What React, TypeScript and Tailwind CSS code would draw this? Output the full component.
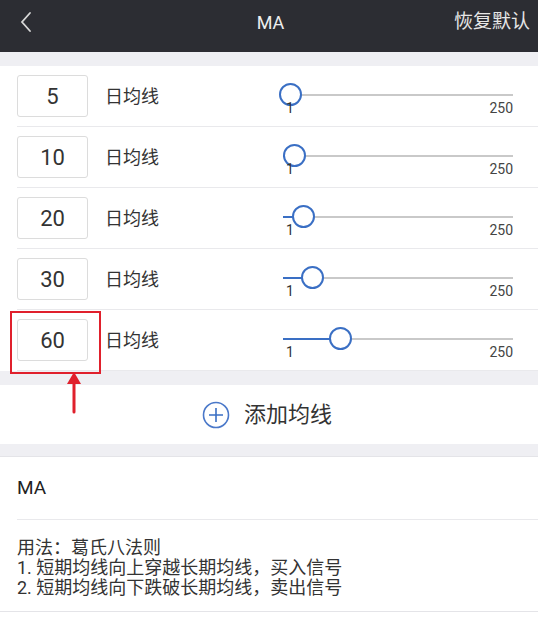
const lines = [
  { n: "5", pos: 7 },
  { n: "10", pos: 11 },
  { n: "20", pos: 20 },
  { n: "30", pos: 29 },
  { n: "60", pos: 57 },
];

const font = { fontFamily: "Roboto, 'Noto Sans CJK SC', sans-serif" };

function Slider({ pos }: { pos: number }) {
  return (
    <div className="mr-[25px] ml-auto flex w-[230px] flex-col pt-[17px]">
      <div className="relative h-[2px] bg-[#c9c9c9]">
        <div className="h-full bg-[#3a6fc4]" style={{ width: pos }} />
        <div
          className="absolute top-[-11px] h-[23px] w-[23px] rounded-full border-2 border-[#3a6fc4] bg-white"
          style={{ left: pos - 11.5 }}
        />
      </div>
      <div className="relative z-10 mt-[4px] flex justify-between pl-[3px] text-[14px] leading-4">
        <span className="text-[#333]">1</span>
        <span className="text-[#444]">250</span>
      </div>
    </div>
  );
}

export default function App() {
  return (
    <div className="relative h-[618px] w-[538px] overflow-hidden bg-white" style={font}>
      <header className="flex h-[52px] items-center bg-[#2c2d33] pb-[8px] text-white">
        <svg className="ml-[19px] h-[22px] w-[14px]" viewBox="0 0 14 22" fill="none">
          <path d="M11 2 L3 11 L11 20" stroke="#d8d8d8" strokeWidth="1.8" strokeLinecap="round" />
        </svg>
        <div className="flex-1 pl-[54px] text-center text-[18px] text-[#eee]">MA</div>
        <div className="mr-[8px] text-[19px] text-[#e6e6e6]">恢复默认</div>
      </header>

      <div className="h-[14px] bg-[#efeff3]" />

      <div>
        {lines.map((l) => (
          <div key={l.n} className="ml-[17px] flex h-[61px] items-center border-b border-[#e9e9ec]">
            <div className="flex h-[42px] w-[71px] items-center justify-center rounded-[3px] border border-[#dcdcdc] text-[22px] text-[#333]">
              {l.n}
            </div>
            <span className="ml-[17px] text-[18px] text-[#333]">日均线</span>
            <Slider pos={l.pos} />
          </div>
        ))}
      </div>

      <div className="h-[14px] bg-[#efeff3]" />

      <div className="flex h-[59px] items-center justify-center gap-[14px] pr-[4px]">
        <svg className="h-[28px] w-[28px]" viewBox="0 0 28 28" fill="none">
          <circle cx="14" cy="14" r="12.5" stroke="#4a78c9" strokeWidth="1.6" />
          <path d="M14 7 V21 M7 14 H21" stroke="#3a6fc4" strokeWidth="1.6" />
        </svg>
        <span className="text-[22px] text-[#333]">添加均线</span>
      </div>

      <div className="h-[13px] border-b border-[#e4e4e8] bg-[#efeff3]" />

      <section className="border-b border-[#e4e4e8]">
        <div className="px-[17px] pt-[19px] pb-[19px] text-[19px] leading-6 text-[#222]">MA</div>
        <div className="ml-[17px] border-t border-[#e9e9ec] pt-[18px] pb-[13px] text-[18px] leading-5 text-[#333]">
          <p>用法：葛氏八法则</p>
          <p>1. 短期均线向上穿越长期均线，买入信号</p>
          <p>2. 短期均线向下跌破长期均线，卖出信号</p>
        </div>
      </section>

      {/* annotation over the 60 row */}
      <div className="absolute top-[311px] left-[10px] h-[63px] w-[91px] border-2 border-[#e0202c]" />
      <svg className="absolute top-[371px] left-[66px] h-[44px] w-[16px]" viewBox="0 0 16 44" fill="none">
        <path d="M8 10 V41" stroke="#e0202c" strokeWidth="3" strokeLinecap="round" />
        <path d="M8 1 L15 13 L1 13 Z" fill="#e0202c" />
      </svg>
    </div>
  );
}
